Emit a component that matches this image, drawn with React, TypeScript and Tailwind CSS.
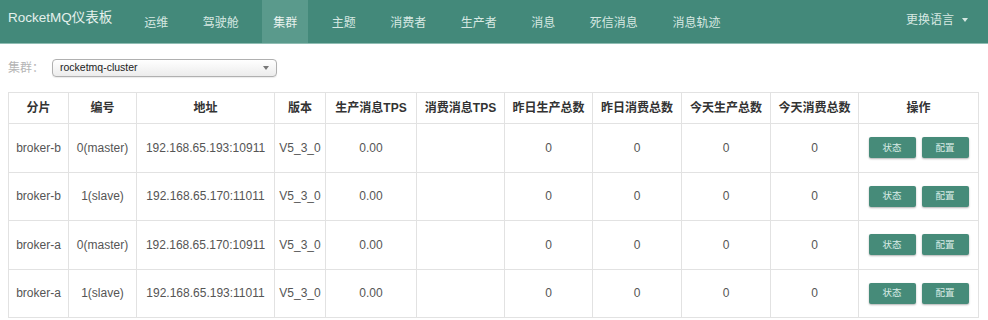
import React from 'react';

const FONT = { fontFamily: '"Liberation Sans", "Noto Sans CJK SC", sans-serif' };

const navItems = ['运维', '驾驶舱', '集群', '主题', '消费者', '生产者', '消息', '死信消息', '消息轨迹'];

const headers = [
  { label: '分片', w: 'w-[60px]' },
  { label: '编号', w: 'w-[68px]' },
  { label: '地址', w: 'w-[138px]' },
  { label: '版本', w: 'w-[51px]' },
  { label: '生产消息TPS', w: 'w-[91px]' },
  { label: '消费消息TPS', w: 'w-[88px]' },
  { label: '昨日生产总数', w: 'w-[88px]' },
  { label: '昨日消费总数', w: 'w-[89px]' },
  { label: '今天生产总数', w: 'w-[89px]' },
  { label: '今天消费总数', w: 'w-[88px]' },
  { label: '操作', w: 'w-[120px]' },
];

const brokers = [
  { name: 'broker-b', id: '0(master)', addr: '192.168.65.193:10911' },
  { name: 'broker-b', id: '1(slave)', addr: '192.168.65.170:11011' },
  { name: 'broker-a', id: '0(master)', addr: '192.168.65.170:10911' },
  { name: 'broker-a', id: '1(slave)', addr: '192.168.65.193:11011' },
];

const Navbar: React.FC = () => (
  <div className="h-[44px] bg-[#43897a] border-b border-[#8fbdb3] flex items-stretch text-[#d6e8e2]">
    <div className="pl-2 w-[127px] flex items-center text-[13.5px] pb-1.5 text-[#e4f0ec]">RocketMQ仪表板</div>
    {navItems.map((item) => (
      <div
        key={item}
        className={`mx-[6.25px] px-[11px] flex items-center text-[12px] pt-0.5 ${item === '集群' ? 'bg-[#5a9a8c] text-[#e8f2ef]' : ''}`}
      >
        {item}
      </div>
    ))}
    <div className="ml-auto pr-5 flex items-center gap-2 text-[12px] pb-1">
      <span>更换语言</span>
      <span className="w-0 h-0 border-x-[3.5px] border-x-transparent border-t-[4px] border-t-[#d6e8e2]" />
    </div>
  </div>
);

const App: React.FC = () => {
  return (
    <div className="w-[988px] h-[320px] bg-white overflow-hidden" style={FONT}>
      <Navbar />

      <div className="px-2 pt-[15px] flex items-center gap-[8px]">
        <span className="text-[12px] text-[#b5b5b5]">集群：</span>
        <div className="w-[225px] h-[18px] rounded-[4px] border border-[#b0b0b0] bg-gradient-to-b from-white to-[#ececec] shadow-[0_1px_1px_rgba(0,0,0,0.08)] flex items-center justify-between px-[7px]">
          <span className="text-[10.5px] text-[#222]">rocketmq-cluster</span>
          <span className="w-0 h-0 border-x-[3px] border-x-transparent border-t-[4px] border-t-[#777]" />
        </div>
      </div>

      <div className="px-2 pt-[15px]">
        <table className="table-fixed w-[970px] border-collapse border border-[#e2e2e2]">
          <thead>
            <tr>
              {headers.map((h) => (
                <th
                  key={h.label}
                  className={`${h.w} h-[31px] border border-[#e2e2e2] text-[12px] font-bold text-[#333] text-center whitespace-nowrap`}
                >
                  {h.label}
                </th>
              ))}
            </tr>
          </thead>
          <tbody>
            {brokers.map((b, i) => (
              <tr key={i}>
                <td className="h-[48.5px] border border-[#e2e2e2] text-[12px] text-[#555] text-center">{b.name}</td>
                <td className="border border-[#e2e2e2] text-[12px] text-[#555] text-center">{b.id}</td>
                <td className="border border-[#e2e2e2] text-[12px] text-[#555] text-center">{b.addr}</td>
                <td className="border border-[#e2e2e2] text-[12px] text-[#555] text-center">V5_3_0</td>
                <td className="border border-[#e2e2e2] text-[12px] text-[#555] text-center">0.00</td>
                <td className="border border-[#e2e2e2] text-[12px] text-[#555] text-center"></td>
                <td className="border border-[#e2e2e2] text-[12px] text-[#555] text-center">0</td>
                <td className="border border-[#e2e2e2] text-[12px] text-[#555] text-center">0</td>
                <td className="border border-[#e2e2e2] text-[12px] text-[#555] text-center">0</td>
                <td className="border border-[#e2e2e2] text-[12px] text-[#555] text-center">0</td>
                <td className="border border-[#e2e2e2] text-center">
                  <div className="flex justify-center gap-1.5">
                    <button className="w-[47px] h-[21px] rounded-[2px] bg-[#468b79] text-[9.5px] text-[#d9ece6] shadow-[0_1px_2px_rgba(0,0,0,0.3)]">
                      状态
                    </button>
                    <button className="w-[47px] h-[21px] rounded-[2px] bg-[#468b79] text-[9.5px] text-[#d9ece6] shadow-[0_1px_2px_rgba(0,0,0,0.3)]">
                      配置
                    </button>
                  </div>
                </td>
              </tr>
            ))}
          </tbody>
        </table>
      </div>
    </div>
  );
};

export default App;
